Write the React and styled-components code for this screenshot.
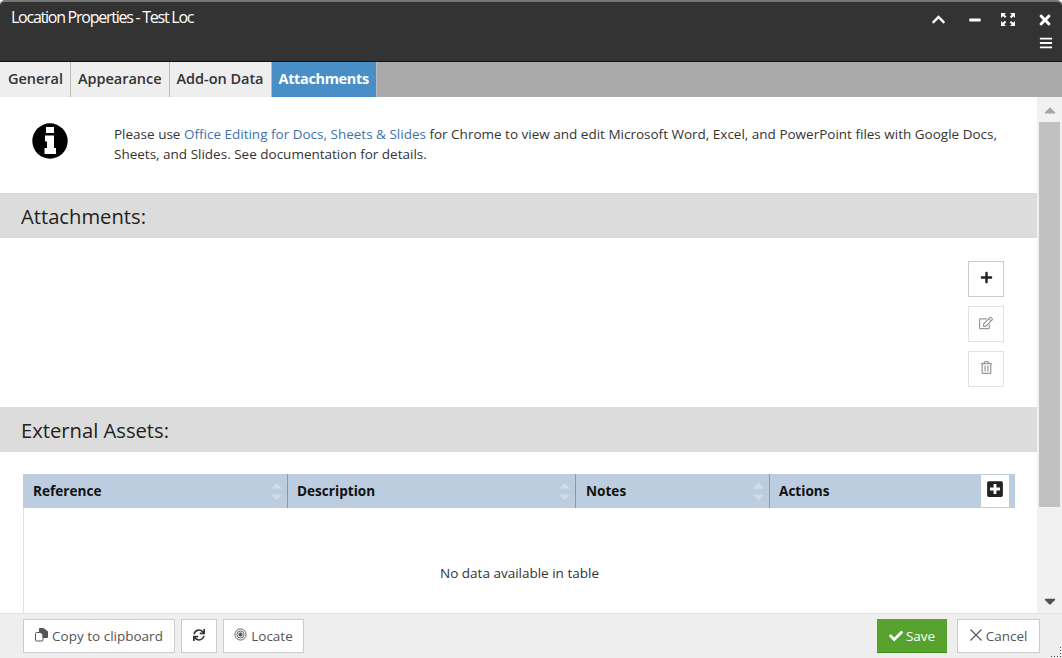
import React from 'react';
import styled, { createGlobalStyle } from 'styled-components';
import {
  FaChevronUp, FaMinus, FaTimes, FaBars, FaPlus, FaRegEdit,
  FaRegTrashAlt, FaPlusSquare, FaSync, FaCheck, FaCaretUp, FaCaretDown,
} from 'react-icons/fa';

const GlobalStyle = createGlobalStyle`
  html, body {
    margin: 0;
    padding: 0;
    background: #fff;
    overflow: hidden;
  }
  * {
    box-sizing: border-box;
  }
`;

const ExpandIcon = () => (
  <svg width="16" height="15" viewBox="0 0 16 15" fill="#fff">
    <path d="M1 1h5L4.4 2.6 6.4 4.6 4.9 6 3 4 1 6zM15 1v5L13.3 4.3 11.3 6.2 9.9 4.8 11.8 2.8 10 1zM1 14V9l1.8 1.7 2-1.9 1.4 1.4-2 2L6 14zM15 14h-5l1.7-1.7-2-2 1.4-1.4 2 1.9L15 9z" />
  </svg>
);

const InfoIcon = () => (
  <svg width="36" height="36" viewBox="0 0 36 36">
    <circle cx="18" cy="18" r="17.7" fill="#000" />
    <path d="M14 4h8v6h-8zM13 12.5h9V25h2v6H12.5v-6H15v-6.5h-2z" fill="#fff" />
  </svg>
);

const CopyIcon = () => (
  <svg width="13" height="14" viewBox="0 0 13 14" fill="none" stroke="#555" strokeWidth="1">
    <rect x="0.5" y="4.5" width="7.5" height="8.5" rx="1" />
    <path d="M4.5 0.5h4l4 3v6H8V6L4.5 4z" fill="#555" />
  </svg>
);

const TargetIcon = () => (
  <svg width="13" height="13" viewBox="0 0 14 14" fill="none" stroke="#555">
    <circle cx="7" cy="7" r="6" />
    <circle cx="7" cy="7" r="3.8" />
    <circle cx="7" cy="7" r="1.8" fill="#555" />
  </svg>
);

const ThinCross = () => (
  <svg width="12" height="12" viewBox="0 0 12 12" stroke="#555" strokeWidth="1.2">
    <path d="M0.5 0.5l11 11M11.5 0.5l-11 11" />
  </svg>
);

const SortArrows = () => (
  <SortBox>
    <FaCaretUp size={17} />
    <FaCaretDown size={17} />
  </SortBox>
);

const tabs = ['General', 'Appearance', 'Add-on Data', 'Attachments'];

const columns = [
  { label: 'Reference', width: 265, pad: 10 },
  { label: 'Description', width: 288, pad: 9 },
  { label: 'Notes', width: 194, pad: 10 },
];

export default function App() {
  return (
    <Window>
      <GlobalStyle />
      <TitleBar>
        <Title>Location Properties - Test Loc</Title>
        <TitleControls>
          <ControlRow>
            <FaChevronUp size={15} />
            <MinusSlot>
              <FaMinus size={12} />
            </MinusSlot>
            <ExpandIcon />
            <FaTimes size={16} />
          </ControlRow>
          <MenuRow>
            <FaBars size={14} />
          </MenuRow>
        </TitleControls>
      </TitleBar>

      <TabBar>
        {tabs.map((tab) => (
          <Tab key={tab} $active={tab === 'Attachments'}>{tab}</Tab>
        ))}
      </TabBar>

      <Main>
        <Content>
          <Notice>
            <NoticeIcon>
              <InfoIcon />
            </NoticeIcon>
            <NoticeText>
              Please use <NoticeLink>Office Editing for Docs, Sheets &amp; Slides</NoticeLink> for
              Chrome to view and edit Microsoft Word, Excel, and PowerPoint files with Google Docs,
              Sheets, and Slides. See documentation for details.
            </NoticeText>
          </Notice>

          <SectionHeader>Attachments:</SectionHeader>
          <AttachmentArea>
            <IconButton>
              <FaPlus size={13} color="#222" />
            </IconButton>
            <IconButton $disabled>
              <FaRegEdit size={14} color="#999" />
            </IconButton>
            <IconButton $disabled>
              <FaRegTrashAlt size={13} color="#999" />
            </IconButton>
          </AttachmentArea>

          <SectionHeader>External Assets:</SectionHeader>
          <TableArea>
            <TableHead>
              {columns.map((col) => (
                <HeadCell key={col.label} $width={col.width} $pad={col.pad}>
                  {col.label}
                  <SortArrows />
                </HeadCell>
              ))}
              <ActionsCell>
                Actions
                <AddRow>
                  <FaPlusSquare size={18} color="#222" />
                </AddRow>
              </ActionsCell>
            </TableHead>
            <EmptyRow>No data available in table</EmptyRow>
          </TableArea>
        </Content>

        <Scrollbar>
          <ScrollArrow>
            <FaCaretUp size={18} color="#a6a6a6" />
          </ScrollArrow>
          <ScrollThumb />
          <ScrollArrow>
            <FaCaretDown size={18} color="#505050" />
          </ScrollArrow>
        </Scrollbar>
      </Main>

      <Footer>
        <FooterGroup>
          <FootButton $width={152}>
            <CopyIcon />
            Copy to clipboard
          </FootButton>
          <FootButton $width={36}>
            <FaSync size={12} color="#333" />
          </FootButton>
          <FootButton $width={81}>
            <TargetIcon />
            Locate
          </FootButton>
        </FooterGroup>
        <FooterGroup $gap={10}>
          <SaveButton>
            <FaCheck size={14} />
            Save
          </SaveButton>
          <FootButton $width={83}>
            <ThinCross />
            Cancel
          </FootButton>
        </FooterGroup>
        <ResizeGrip>
          <svg width="12" height="12" viewBox="0 0 12 12" fill="#555">
            <rect x="10" y="1" width="1" height="1" />
            <rect x="10" y="4" width="1" height="1" />
            <rect x="10" y="7" width="1" height="1" />
            <rect x="10" y="10" width="1" height="1" />
            <rect x="7" y="10" width="1" height="1" />
            <rect x="4" y="10" width="1" height="1" />
            <rect x="1" y="10" width="1" height="1" />
          </svg>
        </ResizeGrip>
      </Footer>
    </Window>
  );
}

const Window = styled.div`
  position: relative;
  width: 1062px;
  height: 658px;
  display: flex;
  flex-direction: column;
  font-family: 'Open Sans', 'Liberation Sans', sans-serif;
  font-size: 13.5px;
  color: #333;
  background: #fff;
  overflow: hidden;
`;

const TitleBar = styled.div`
  height: 62px;
  flex: none;
  display: flex;
  justify-content: space-between;
  background: #333;
  border-top: 2px solid #777;
  border-bottom: 1px solid #111;
  border-radius: 5px 5px 0 0;
  color: #fff;
`;

const Title = styled.div`
  padding: 4px 0 0 11px;
  font-size: 16px;
  line-height: 22px;
  letter-spacing: -1.25px;
`;

const TitleControls = styled.div`
  display: flex;
  flex-direction: column;
  align-items: flex-end;
  padding: 10px 9px 0 0;
`;

const ControlRow = styled.div`
  display: flex;
  align-items: center;
  gap: 21px;
  height: 15px;
`;

const MinusSlot = styled.div`
  display: flex;
  position: relative;
  left: 2px;

  svg {
    transform: scale(1.1, 1.25);
  }
`;

const MenuRow = styled.div`
  display: flex;
  margin-top: 9px;
`;

const TabBar = styled.div`
  height: 35px;
  flex: none;
  display: flex;
  background: #aaa;
`;

const Tab = styled.div`
  display: flex;
  align-items: center;
  padding: 0 7px 2px;
  font-size: 14.5px;
  font-weight: ${(p) => (p.$active ? 700 : 600)};
  letter-spacing: ${(p) => (p.$active ? '-0.35px' : '-0.03px')};
  color: ${(p) => (p.$active ? '#fff' : '#333')};
  background: ${(p) => (p.$active ? '#4a8ec8' : '#eee')};
  border-right: 1px solid #bbb;

  &:first-child {
    padding-left: 8px;
  }
`;

const Main = styled.div`
  flex: 1;
  min-height: 0;
  display: flex;
`;

const Content = styled.div`
  flex: 1;
  min-width: 0;
  overflow: hidden;
`;

const Notice = styled.div`
  height: 96px;
  display: flex;
  padding-top: 27px;
`;

const NoticeIcon = styled.div`
  width: 114px;
  flex: none;
  padding-left: 32px;
  margin-top: -1px;
`;

const NoticeText = styled.div`
  width: 900px;
  line-height: 20px;
`;

const NoticeLink = styled.span`
  color: #3f73ab;
`;

const SectionHeader = styled.div`
  height: 45px;
  display: flex;
  align-items: center;
  padding-left: 21px;
  background: #dcdcdc;
  font-size: 20.2px;
  color: #222;
`;

const AttachmentArea = styled.div`
  height: 169px;
  display: flex;
  flex-direction: column;
  align-items: flex-end;
  gap: 9px;
  padding: 23px 33px 0 0;
`;

const IconButton = styled.div`
  width: 36px;
  height: 36px;
  display: flex;
  align-items: center;
  justify-content: center;
  padding-bottom: 3px;
  background: #fff;
  border: 1px solid ${(p) => (p.$disabled ? '#e2e2e2' : '#ccc')};
`;

const TableArea = styled.div`
  padding: 22px 22px 0 23px;
`;

const TableHead = styled.div`
  height: 34px;
  display: flex;
  background: #bccde0;
  font-weight: 700;
  font-size: 13.6px;
  color: #111;
`;

const HeadCell = styled.div`
  width: ${(p) => p.$width}px;
  flex: none;
  display: flex;
  align-items: center;
  justify-content: space-between;
  padding: 0 2px 2px ${(p) => p.$pad}px;
  border-right: 1px solid #7f9bbf;
`;

const SortBox = styled.div`
  display: flex;
  flex-direction: column;
  color: #d3dbe5;
  padding-top: 2px;

  svg {
    display: block;
    margin: -3px 0;
  }
`;

const ActionsCell = styled.div`
  flex: 1;
  position: relative;
  display: flex;
  align-items: center;
  padding: 0 0 2px 9px;
`;

const AddRow = styled.div`
  position: absolute;
  top: 1px;
  right: 6px;
  width: 28px;
  height: 32px;
  display: flex;
  align-items: flex-start;
  justify-content: center;
  padding-top: 5px;
  background: #fff;
`;

const EmptyRow = styled.div`
  height: 130px;
  display: flex;
  justify-content: center;
  padding-top: 55px;
  border-left: 1px solid #e0e0e0;
  line-height: 20px;
`;

const Scrollbar = styled.div`
  width: 25px;
  flex: none;
  display: flex;
  flex-direction: column;
  background: #f1f1f1;
`;

const ScrollArrow = styled.div`
  height: 25px;
  flex: none;
  display: flex;
  align-items: center;
  justify-content: center;
`;

const ScrollThumb = styled.div`
  width: 21px;
  height: 385px;
  margin: 0 auto auto 2px;
  background: #c1c1c1;
`;

const Footer = styled.div`
  position: relative;
  height: 45px;
  flex: none;
  display: flex;
  justify-content: space-between;
  padding: 5px 22px 0 23px;
  background: #eee;
  border-top: 1px solid #e2e2e2;
`;

const FooterGroup = styled.div`
  display: flex;
  gap: ${(p) => p.$gap || 6}px;
`;

const FootButton = styled.div`
  width: ${(p) => p.$width}px;
  height: 34px;
  display: flex;
  align-items: center;
  justify-content: center;
  gap: 4px;
  padding-bottom: 1px;
  background: #fff;
  border: 1px solid #ccc;
  color: #555;

  svg {
    margin-bottom: 2px;
  }
`;

const SaveButton = styled.div`
  width: 70px;
  height: 34px;
  display: flex;
  align-items: center;
  justify-content: center;
  gap: 3px;
  background: #57a22c;
  border-bottom: 1px solid #3f8a1c;
  color: #fff;
`;

const ResizeGrip = styled.div`
  position: absolute;
  right: 0;
  bottom: 0;
  width: 12px;
  height: 12px;
  line-height: 0;
`;
